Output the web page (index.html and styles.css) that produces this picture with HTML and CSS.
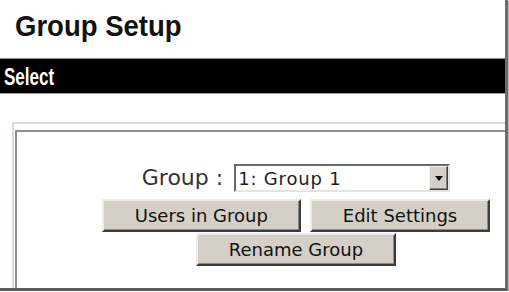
FILE: index.html
```html
<!DOCTYPE html>
<html>
<head>
<meta charset="utf-8">
<link rel="stylesheet" href="styles.css">
</head>
<body>
<div class="frame">
  <h1 class="title">Group Setup</h1>
  <div class="bar"><span class="bar-text">Select</span></div>
  <div class="panel-outer">
    <div class="panel">
      <div class="row row-select">
        <label class="label">Group :</label>
        <div class="select">
          <span class="select-text">1: Group 1</span>
          <span class="select-btn"><span class="arrow"></span></span>
        </div>
      </div>
      <div class="row row-buttons">
        <button class="btn">Users in Group</button>
        <button class="btn">Edit Settings</button>
      </div>
      <div class="row row-buttons">
        <button class="btn">Rename Group</button>
      </div>
    </div>
  </div>
</div>
</body>
</html>
```
FILE: styles.css
```css
html, body {
  margin: 0;
  padding: 0;
  background: #ffffff;
}

.frame {
  width: 505px;
  height: 288px;
  overflow: hidden;
  border-right: 3px solid #6c6c6c;
  border-bottom: 3px solid #5c5c5c;
  box-shadow: 1px 1px 0 #b8b8b8;
  background: #ffffff;
}

.title {
  margin: 0;
  height: 58px;
  box-sizing: border-box;
  padding: 9px 0 0 15px;
  font-family: "Liberation Sans", Arial, sans-serif;
  font-weight: bold;
  font-size: 27.5px;
  line-height: 31px;
  color: #111111;
  transform: scaleY(1.06);
  transform-origin: left top;
}

.bar {
  box-sizing: border-box;
  background: #000000;
  border-top: 1px solid #8a8a8a;
  border-bottom: 1px solid #9a9a9a;
  height: 36px;
  padding: 3px 0 0 4px;
  font-family: "Liberation Sans", Arial, sans-serif;
  font-weight: bold;
  font-size: 23px;
  line-height: 31px;
  color: #ffffff;
}

.bar-text {
  display: inline-block;
  transform: scaleX(0.74);
  transform-origin: left center;
}

.panel-outer {
  margin: 28px 0 0 12px;
  width: 600px;
  border-left: 2px solid #dcd8ce;
  border-top: 2px solid #dcd8ce;
  padding: 6px 0 0 1px;
}

.panel {
  width: 558px;
  height: 200px;
  border-left: 2px solid #8e8e8e;
  border-top: 2px solid #8e8e8e;
  padding-top: 32px;
  font-family: "DejaVu Sans", Verdana, sans-serif;
}

.row {
  display: flex;
  justify-content: center;
}

.row-select {
  align-items: center;
  gap: 11px;
  margin-bottom: 7px;
}

.label {
  font-size: 22px;
  color: #333333;
  line-height: 28px;
}

.select {
  width: 216px;
  height: 28px;
  box-sizing: border-box;
  display: flex;
  align-items: stretch;
  border-top: 2px solid #6a6a6a;
  border-left: 2px solid #6a6a6a;
  border-bottom: 2px solid #e6e4de;
  border-right: 2px solid #e6e4de;
  background: #ffffff;
}

.select-text {
  flex: 1;
  padding: 2px 0 0 2px;
  font-size: 18px;
  letter-spacing: 0.8px;
  line-height: 22px;
  color: #1e1e1e;
}

.select-btn {
  width: 19px;
  box-sizing: border-box;
  background: #d4d0c8;
  border-top: 1px solid #f4f3ef;
  border-left: 1px solid #f4f3ef;
  border-right: 1px solid #404040;
  border-bottom: 1px solid #404040;
  box-shadow: inset -1px -1px 0 #808080;
  display: flex;
  align-items: center;
  justify-content: center;
}

.arrow {
  width: 0;
  height: 0;
  border-left: 4px solid transparent;
  border-right: 4px solid transparent;
  border-top: 5px solid #000000;
}

.row-buttons {
  gap: 9px;
  margin-bottom: 1px;
}

.btn {
  height: 33px;
  box-sizing: border-box;
  padding: 1px 31px 0;
  margin: 0;
  font-family: "DejaVu Sans", Verdana, sans-serif;
  font-size: 18px;
  line-height: 28px;
  color: #111111;
  background: #d4d0c8;
  border-style: solid;
  border-width: 2px;
  border-top-color: #eeece6;
  border-left-color: #eeece6;
  border-right-color: #3c3c3c;
  border-bottom-color: #3c3c3c;
  box-shadow: inset -1px -1px 0 #8a8a8a;
  border-radius: 0;
}
```
